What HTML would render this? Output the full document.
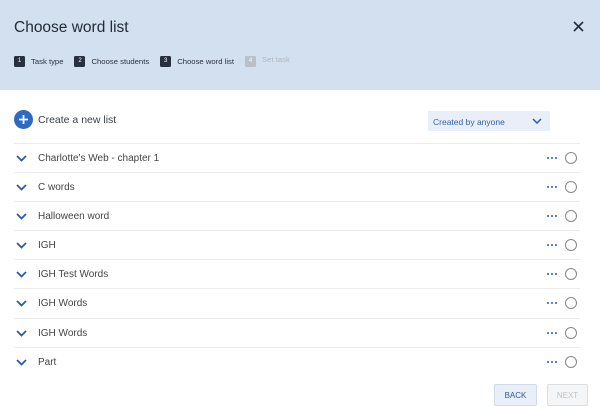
<!DOCTYPE html>
<html><head><style>
*{margin:0;padding:0;box-sizing:border-box}
body{width:600px;height:405px;overflow:hidden;background:#fff;font-family:"Liberation Sans",sans-serif;position:relative;color:#333}
.hdr{position:absolute;left:0;top:0;width:600px;height:90px;background:#d3e0f0}
.title{position:absolute;left:14px;top:19px;font-size:15.5px;color:#222b38}
.x{position:absolute;left:573px;top:21px}
.steps{position:absolute;left:14px;top:55px;font-size:7.7px;color:#2a3340;display:flex;align-items:center}
.n{display:inline-block;width:11px;height:11px;background:#26303f;color:#fff;font-size:6px;text-align:center;line-height:11px;border-radius:1.5px;margin-right:6px}
.s{margin-right:11px}
.dis{color:#b0b8c2}.dis .n{background:#b8c0ca}
.plus{position:absolute;left:14px;top:110px;width:19px;height:19px;border-radius:50%;background:#2e6ac0}
.create{position:absolute;left:38px;top:114px;font-size:10.5px;color:#3a3f47}
.dd{position:absolute;left:428px;top:111px;width:122px;height:20px;background:#e8eff8;font-size:8.5px;color:#3560a8;padding:6px 0 0 5px}
.row{position:absolute;left:14px;width:566px;height:29px;border-top:1px solid #e8eaec;font-size:10px;color:#444}
.row span{position:absolute;left:24px;top:9px}
.row svg.c{position:absolute;left:2px;top:11px}
.dots{position:absolute;left:533px;top:13px;width:10px;height:3px}
.dots i{position:absolute;top:0;width:2.4px;height:2.4px;border-radius:50%;background:#2a5ca8}
.circ{position:absolute;left:551px;top:8px;width:12px;height:12px;border:1px solid #888;border-radius:50%}
.btn{position:absolute;top:384px;height:22px;font-size:8px;text-align:center;line-height:22px;border-radius:2px}
</style></head><body>
<div class="hdr">
<div class="title">Choose word list</div>
<svg class="x" width="11" height="11" viewBox="0 0 11 11"><path d="M1 1L10 10M10 1L1 10" stroke="#222b38" stroke-width="1.6"/></svg>
<div class="steps"><span class="n">1</span><span class="s">Task type</span><span class="n">2</span><span class="s">Choose students</span><span class="n">3</span><span class="s">Choose word list</span><span class="dis"><span class="n">4</span>Set task</span></div>
</div>
<div class="plus"><svg width="19" height="19"><path d="M9.5 5V14M5 9.5H14" stroke="#fff" stroke-width="1.8"/></svg></div>
<div class="create">Create a new list</div>
<div class="dd">Created by anyone<svg style="position:absolute;left:104px;top:7px" width="10" height="6"><path d="M1 1L5 5L9 1" stroke="#2a5ca8" stroke-width="1.5" fill="none"/></svg></div>

<div class="row" style="top:143px"><svg class="c" width="11" height="7"><path d="M1 1L5.5 5.5L10 1" stroke="#2a5ca8" stroke-width="1.8" fill="none"/></svg><span>Charlotte's Web - chapter 1</span><div class="dots"><i style="left:0"></i><i style="left:3.8px"></i><i style="left:7.6px"></i></div><div class="circ"></div></div>
<div class="row" style="top:172px"><svg class="c" width="11" height="7"><path d="M1 1L5.5 5.5L10 1" stroke="#2a5ca8" stroke-width="1.8" fill="none"/></svg><span>C words</span><div class="dots"><i style="left:0"></i><i style="left:3.8px"></i><i style="left:7.6px"></i></div><div class="circ"></div></div>
<div class="row" style="top:201px"><svg class="c" width="11" height="7"><path d="M1 1L5.5 5.5L10 1" stroke="#2a5ca8" stroke-width="1.8" fill="none"/></svg><span>Halloween word</span><div class="dots"><i style="left:0"></i><i style="left:3.8px"></i><i style="left:7.6px"></i></div><div class="circ"></div></div>
<div class="row" style="top:230px"><svg class="c" width="11" height="7"><path d="M1 1L5.5 5.5L10 1" stroke="#2a5ca8" stroke-width="1.8" fill="none"/></svg><span>IGH</span><div class="dots"><i style="left:0"></i><i style="left:3.8px"></i><i style="left:7.6px"></i></div><div class="circ"></div></div>
<div class="row" style="top:259px"><svg class="c" width="11" height="7"><path d="M1 1L5.5 5.5L10 1" stroke="#2a5ca8" stroke-width="1.8" fill="none"/></svg><span>IGH Test Words</span><div class="dots"><i style="left:0"></i><i style="left:3.8px"></i><i style="left:7.6px"></i></div><div class="circ"></div></div>
<div class="row" style="top:288px"><svg class="c" width="11" height="7"><path d="M1 1L5.5 5.5L10 1" stroke="#2a5ca8" stroke-width="1.8" fill="none"/></svg><span>IGH Words</span><div class="dots"><i style="left:0"></i><i style="left:3.8px"></i><i style="left:7.6px"></i></div><div class="circ"></div></div>
<div class="row" style="top:318px"><svg class="c" width="11" height="7"><path d="M1 1L5.5 5.5L10 1" stroke="#2a5ca8" stroke-width="1.8" fill="none"/></svg><span>IGH Words</span><div class="dots"><i style="left:0"></i><i style="left:3.8px"></i><i style="left:7.6px"></i></div><div class="circ"></div></div>
<div class="row" style="top:347px"><svg class="c" width="11" height="7"><path d="M1 1L5.5 5.5L10 1" stroke="#2a5ca8" stroke-width="1.8" fill="none"/></svg><span>Part</span><div class="dots"><i style="left:0"></i><i style="left:3.8px"></i><i style="left:7.6px"></i></div><div class="circ"></div></div>

<div class="btn" style="left:494px;width:43px;background:#e8eff8;border:1px solid #d0dcea;color:#2d5aa0">BACK</div>
<div class="btn" style="left:547px;width:41px;background:#f4f5f6;border:1px solid #dcdfe2;color:#c0c4c8">NEXT</div>
</body></html>
